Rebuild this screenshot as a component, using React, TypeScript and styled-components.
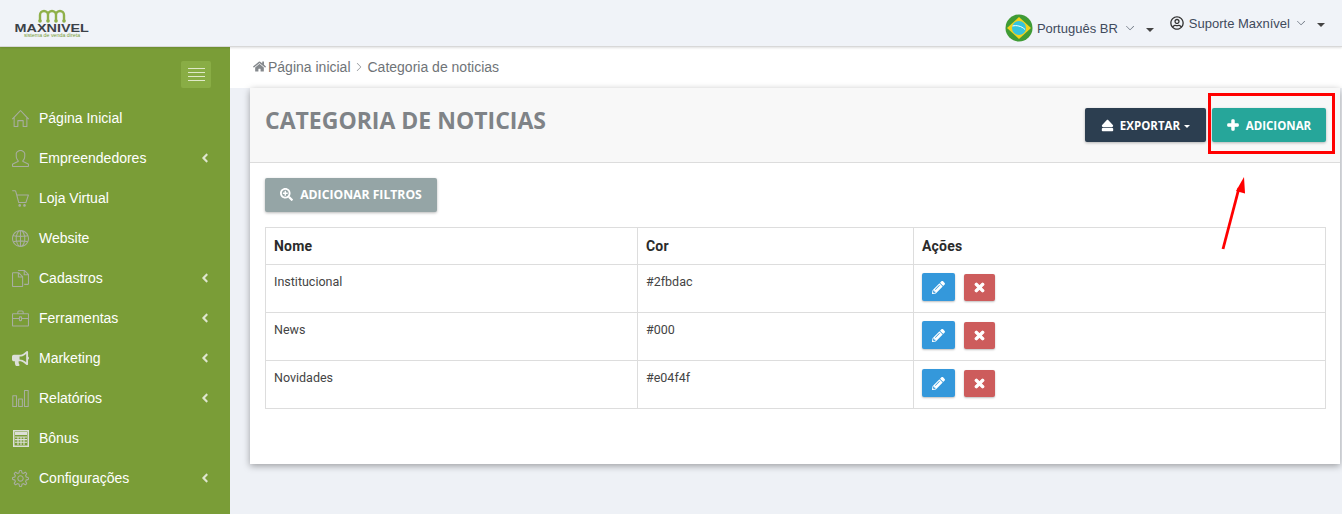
import React from "react";
import styled, { createGlobalStyle } from "styled-components";
import { FaHome, FaSearchPlus, FaEject, FaPlus, FaPencilAlt, FaTimes, FaBullhorn, FaAngleLeft, FaRegUserCircle } from "react-icons/fa";
import { SlHome, SlUser, SlBasket, SlGlobe, SlDocs, SlBriefcase, SlChart, SlSettings, SlArrowDown, SlArrowRight } from "react-icons/sl";

const GlobalStyle = createGlobalStyle`
  html, body { margin: 0; padding: 0; height: 100%; overflow: hidden; }
  body { background: #eef1f6; font-family: "Liberation Sans", Arial, sans-serif; }
`;

const Page = styled.div`
  width: 1342px;
  height: 514px;
  position: relative;
  overflow: hidden;
  display: flex;
  flex-direction: column;
`;

const TopBar = styled.header`
  height: 46px;
  flex: none;
  background: #f0f3f8;
  border-bottom: 1px solid #d8d8d8;
  box-shadow: 0 1px 2px rgba(0, 0, 0, 0.12);
  display: flex;
  align-items: flex-start;
  justify-content: space-between;
  position: relative;
  z-index: 2;
`;

const Logo = styled.div`
  width: 76px;
  margin: 9px 0 0 14px;
  display: flex;
  flex-direction: column;
  align-items: center;
`;

const LogoMark = styled.svg`
  width: 30px;
  height: 14px;
  display: block;
`;

const LogoName = styled.div`
  font-size: 11.5px;
  line-height: 10px;
  font-weight: 700;
  color: #3b4148;
  transform: scaleX(1.25);
`;

const LogoTag = styled.div`
  font-size: 5.3px;
  line-height: 5px;
  color: #7a9d37;
  white-space: nowrap;
`;

const TopRight = styled.div`
  display: flex;
  align-items: flex-start;
  margin-right: 17px;
`;

const Language = styled.div`
  display: flex;
  align-items: center;
  height: 28px;
  margin-top: 14px;
  font-size: 13px;
  color: #3f4a5c;
`;

const Flag = styled.svg`
  width: 28px;
  height: 28px;
  margin-right: 4px;
`;

const Account = styled.div`
  display: flex;
  align-items: center;
  height: 18px;
  margin: 14px 0 0 16px;
  font-size: 13px;
  color: #3f4a5c;
  svg.user { font-size: 14px; margin-right: 5px; color: #333; }
`;

const Chevron = styled(SlArrowDown)<{ $gap: number }>`
  font-size: 8px;
  color: #4b5563;
  margin-left: ${(p) => p.$gap}px;
`;

const Caret = styled.span`
  display: inline-block;
  width: 0;
  height: 0;
  margin-left: 12px;
  margin-top: 3px;
  border-left: 4px solid transparent;
  border-right: 4px solid transparent;
  border-top: 4px solid #444;
`;

const Body = styled.div`
  flex: 1;
  display: flex;
  min-height: 0;
`;

const Sidebar = styled.nav`
  width: 230px;
  flex: none;
  background: #7a9d37;
  display: flex;
  flex-direction: column;
  padding-top: 14px;
`;

const Burger = styled.div`
  width: 30px;
  height: 27px;
  margin: 0 19px 10px auto;
  flex: none;
  background: #89ad45;
  border-radius: 2px;
  display: flex;
  flex-direction: column;
  justify-content: center;
  gap: 3px;
  align-items: center;
  span { display: block; width: 17px; height: 1px; background: #dfe9c8; }
`;

const MenuItem = styled.div`
  height: 40px;
  flex: none;
  display: flex;
  align-items: center;
  padding: 0 18px 0 12px;
  color: #fff;
  font-size: 14px;
`;

const MenuIcon = styled.span<{ $light?: boolean }>`
  width: 17px;
  display: flex;
  justify-content: center;
  margin-right: 10px;
  font-size: 17px;
  color: ${(p) => (p.$light ? "#dcdfd8" : "#a8aea0")};
`;

const CalcIcon = styled.svg`
  width: 16px;
  height: 17px;
  display: block;
`;

const MenuLabel = styled.span`
  flex: 1;
`;

const MenuArrow = styled(FaAngleLeft)`
  font-size: 14px;
  color: #dfe6cf;
`;

const Main = styled.main`
  flex: 1;
  min-width: 0;
  display: flex;
  flex-direction: column;
`;

const Breadcrumb = styled.div`
  height: 41px;
  flex: none;
  box-sizing: border-box;
  padding: 0 0 2px 23px;
  background: #fff;
  display: flex;
  align-items: center;
  font-size: 14px;
  color: #6f7478;
  svg.home { font-size: 13px; color: #85898d; margin-right: 2px; }
  svg.sep { font-size: 8px; color: #85898d; margin: 1px 4.5px 0; }
`;

const Panel = styled.section`
  height: 376px;
  margin: 0 2px 0 20px;
  background: #fff;
  border-radius: 3px 3px 0 0;
  box-shadow: 0 2px 7px rgba(0, 0, 0, 0.35);
  display: flex;
  flex-direction: column;
`;

const PanelHeader = styled.div`
  height: 75px;
  flex: none;
  background: #f8f8f8;
  border-bottom: 1px solid #dcdcdc;
  display: flex;
  justify-content: space-between;
  align-items: flex-start;
  padding: 0 14px 0 15px;
  box-sizing: border-box;
`;

const Title = styled.h1`
  margin: 15px 0 0;
  font-family: "Open Sans", sans-serif;
  font-size: 23px;
  line-height: 34px;
  font-weight: 700;
  color: #7f8387;
`;

const HeaderActions = styled.div`
  display: flex;
  gap: 6px;
  margin-top: 20px;
`;

const Button = styled.button<{ $bg: string; $w: number; $size: number }>`
  height: 34px;
  width: ${(p) => p.$w}px;
  border: none;
  border-radius: 2px;
  background: ${(p) => p.$bg};
  color: #fff;
  font-family: "Open Sans", sans-serif;
  font-size: ${(p) => p.$size}px;
  font-weight: 700;
  display: flex;
  align-items: center;
  justify-content: center;
  padding: 0;
  box-shadow: 0 1px 3px rgba(0, 0, 0, 0.28);
`;

const FilterButton = styled(Button)`
  padding-bottom: 2px;
`;

const ButtonIcon = styled.span<{ $size: number; $gap: number }>`
  display: flex;
  font-size: ${(p) => p.$size}px;
  margin-right: ${(p) => p.$gap}px;
`;

const BoldPlus = styled(FaPlus)`
  stroke: currentColor;
  stroke-width: 50;
`;

const SmallCaret = styled.span`
  width: 0;
  height: 0;
  margin-left: 4px;
  margin-top: 2px;
  border-left: 3.5px solid transparent;
  border-right: 3.5px solid transparent;
  border-top: 3.5px solid #fff;
`;

const PanelBody = styled.div`
  padding: 15px 15px 0;
`;

const Table = styled.table`
  margin-top: 15px;
  width: 1060px;
  border-collapse: collapse;
  table-layout: fixed;
  color: #444;
  th, td { border: 1px solid #ddd; box-sizing: border-box; vertical-align: top; text-align: left; }
  th {
    height: 37px;
    padding: 0 8px;
    vertical-align: middle;
    font-family: Roboto, sans-serif;
    font-size: 14px;
    font-weight: 700;
    letter-spacing: 0.2px;
    color: #2b2b2b;
  }
  td { height: 48px; padding: 9px 8px 0; font-family: Roboto, sans-serif; font-size: 12.5px; line-height: 16px; }
`;

const RowActions = styled.div`
  display: flex;
  align-items: flex-end;
  gap: 9px;
  margin-top: -1px;
`;

const IconButton = styled.button<{ $bg: string; $w: number; $h: number }>`
  width: ${(p) => p.$w}px;
  height: ${(p) => p.$h}px;
  border: none;
  padding: 0;
  border-radius: 2px;
  background: ${(p) => p.$bg};
  color: #fff;
  font-size: 13px;
  display: flex;
  align-items: center;
  justify-content: center;
  box-shadow: 0 1px 2px rgba(0, 0, 0, 0.25);
`;

const BoldTimes = styled(FaTimes)`
  stroke: currentColor;
  stroke-width: 40;
`;

const Highlight = styled.div`
  position: absolute;
  left: 1208px;
  top: 93px;
  width: 127px;
  height: 61px;
  box-sizing: border-box;
  border: 3px solid #f00;
`;

const Arrow = styled.svg`
  position: absolute;
  left: 1215px;
  top: 172px;
  width: 36px;
  height: 82px;
`;

const Calculator = () => (
  <CalcIcon viewBox="0 0 16 17">
    <rect x="0.75" y="0.75" width="14.5" height="15.5" fill="none" stroke="currentColor" strokeWidth="1.5" />
    <rect x="2" y="2" width="12" height="3" fill="currentColor" />
    <path d="M2 7h12M2 9.6h12M2 12.2h12M5 6.5V15M8 6.5V15M11 6.5V15" stroke="currentColor" strokeWidth="1.1" fill="none" />
  </CalcIcon>
);

const menu = [
  { label: "Página Inicial", icon: <SlHome /> },
  { label: "Empreendedores", icon: <SlUser />, sub: true },
  { label: "Loja Virtual", icon: <SlBasket /> },
  { label: "Website", icon: <SlGlobe /> },
  { label: "Cadastros", icon: <SlDocs />, sub: true },
  { label: "Ferramentas", icon: <SlBriefcase />, sub: true },
  { label: "Marketing", icon: <FaBullhorn />, sub: true, light: true },
  { label: "Relatórios", icon: <SlChart />, sub: true },
  { label: "Bônus", icon: <Calculator />, light: true },
  { label: "Configurações", icon: <SlSettings />, sub: true },
];

const rows = [
  { name: "Institucional", color: "#2fbdac" },
  { name: "News", color: "#000" },
  { name: "Novidades", color: "#e04f4f" },
];

const App: React.FC = () => {
  return (
    <Page>
      <GlobalStyle />
      <TopBar>
        <Logo>
          <LogoMark viewBox="0 0 30 14">
            <path d="M3 12V6a4 4 0 0 1 8 0v6M11 6a4 4 0 0 1 8 0v6M19 6a4 4 0 0 1 8 0v6" fill="none" stroke="#8fb04a" strokeWidth="2.4" />
            <circle cx="3" cy="12" r="1.8" fill="#8fb04a" />
            <circle cx="11" cy="12" r="1.8" fill="#8fb04a" />
            <circle cx="19" cy="12" r="1.8" fill="#8fb04a" />
            <circle cx="27" cy="12" r="1.8" fill="#8fb04a" />
          </LogoMark>
          <LogoName>MAXNIVEL</LogoName>
          <LogoTag>sistema de venda direta</LogoTag>
        </Logo>
        <TopRight>
          <Language>
            <Flag viewBox="0 0 28 28">
              <circle cx="14" cy="14" r="13.5" fill="#3f9b35" />
              <path d="M14 3 26 14 14 25 2 14Z" fill="#f2d21c" />
              <circle cx="14" cy="14" r="7" fill="#35c4dc" />
              <path d="M7.5 12c4-1 9 0 12.5 3.500" fill="none" stroke="#fff" strokeWidth="1" />
            </Flag>
            Português BR
            <Chevron $gap={8} />
            <Caret />
          </Language>
          <Account>
            <FaRegUserCircle className="user" />
            Suporte Maxnível
            <Chevron $gap={7} />
            <Caret />
          </Account>
        </TopRight>
      </TopBar>
      <Body>
        <Sidebar>
          <Burger>
            <span />
            <span />
            <span />
            <span />
          </Burger>
          {menu.map((item) => (
            <MenuItem key={item.label}>
              <MenuIcon $light={item.light}>{item.icon}</MenuIcon>
              <MenuLabel>{item.label}</MenuLabel>
              {item.sub && <MenuArrow />}
            </MenuItem>
          ))}
        </Sidebar>
        <Main>
          <Breadcrumb>
            <FaHome className="home" />
            Página inicial
            <SlArrowRight className="sep" />
            Categoria de noticias
          </Breadcrumb>
          <Panel>
            <PanelHeader>
              <Title>CATEGORIA DE NOTICIAS</Title>
              <HeaderActions>
                <Button $bg="#2c3e50" $w={121} $size={11.5}>
                  <ButtonIcon $size={13} $gap={6}><FaEject /></ButtonIcon>
                  EXPORTAR
                  <SmallCaret />
                </Button>
                <Button $bg="#26a69a" $w={114} $size={11.5}>
                  <ButtonIcon $size={12} $gap={7}><BoldPlus /></ButtonIcon>
                  ADICIONAR
                </Button>
              </HeaderActions>
            </PanelHeader>
            <PanelBody>
              <FilterButton $bg="#95a5a6" $w={172} $size={12.2}>
                <ButtonIcon $size={13} $gap={7}><FaSearchPlus /></ButtonIcon>
                ADICIONAR FILTROS
              </FilterButton>
              <Table>
                <colgroup>
                  <col style={{ width: 372 }} />
                  <col style={{ width: 276 }} />
                  <col style={{ width: 412 }} />
                </colgroup>
                <thead>
                  <tr>
                    <th>Nome</th>
                    <th>Cor</th>
                    <th>Ações</th>
                  </tr>
                </thead>
                <tbody>
                  {rows.map((row) => (
                    <tr key={row.name}>
                      <td>{row.name}</td>
                      <td>{row.color}</td>
                      <td>
                        <RowActions>
                          <IconButton $bg="#3498db" $w={33} $h={28}><FaPencilAlt /></IconButton>
                          <IconButton $bg="#cd5c5c" $w={31} $h={27}><BoldTimes /></IconButton>
                        </RowActions>
                      </td>
                    </tr>
                  ))}
                </tbody>
              </Table>
            </PanelBody>
          </Panel>
        </Main>
      </Body>
      <Highlight />
      <Arrow viewBox="0 0 36 82">
        <path d="M8 77 24 16" stroke="#f00" strokeWidth="2.8" fill="none" />
        <path d="M29 5 21 19l9 2.500Z" fill="#f00" />
      </Arrow>
    </Page>
  );
};

export default App;
